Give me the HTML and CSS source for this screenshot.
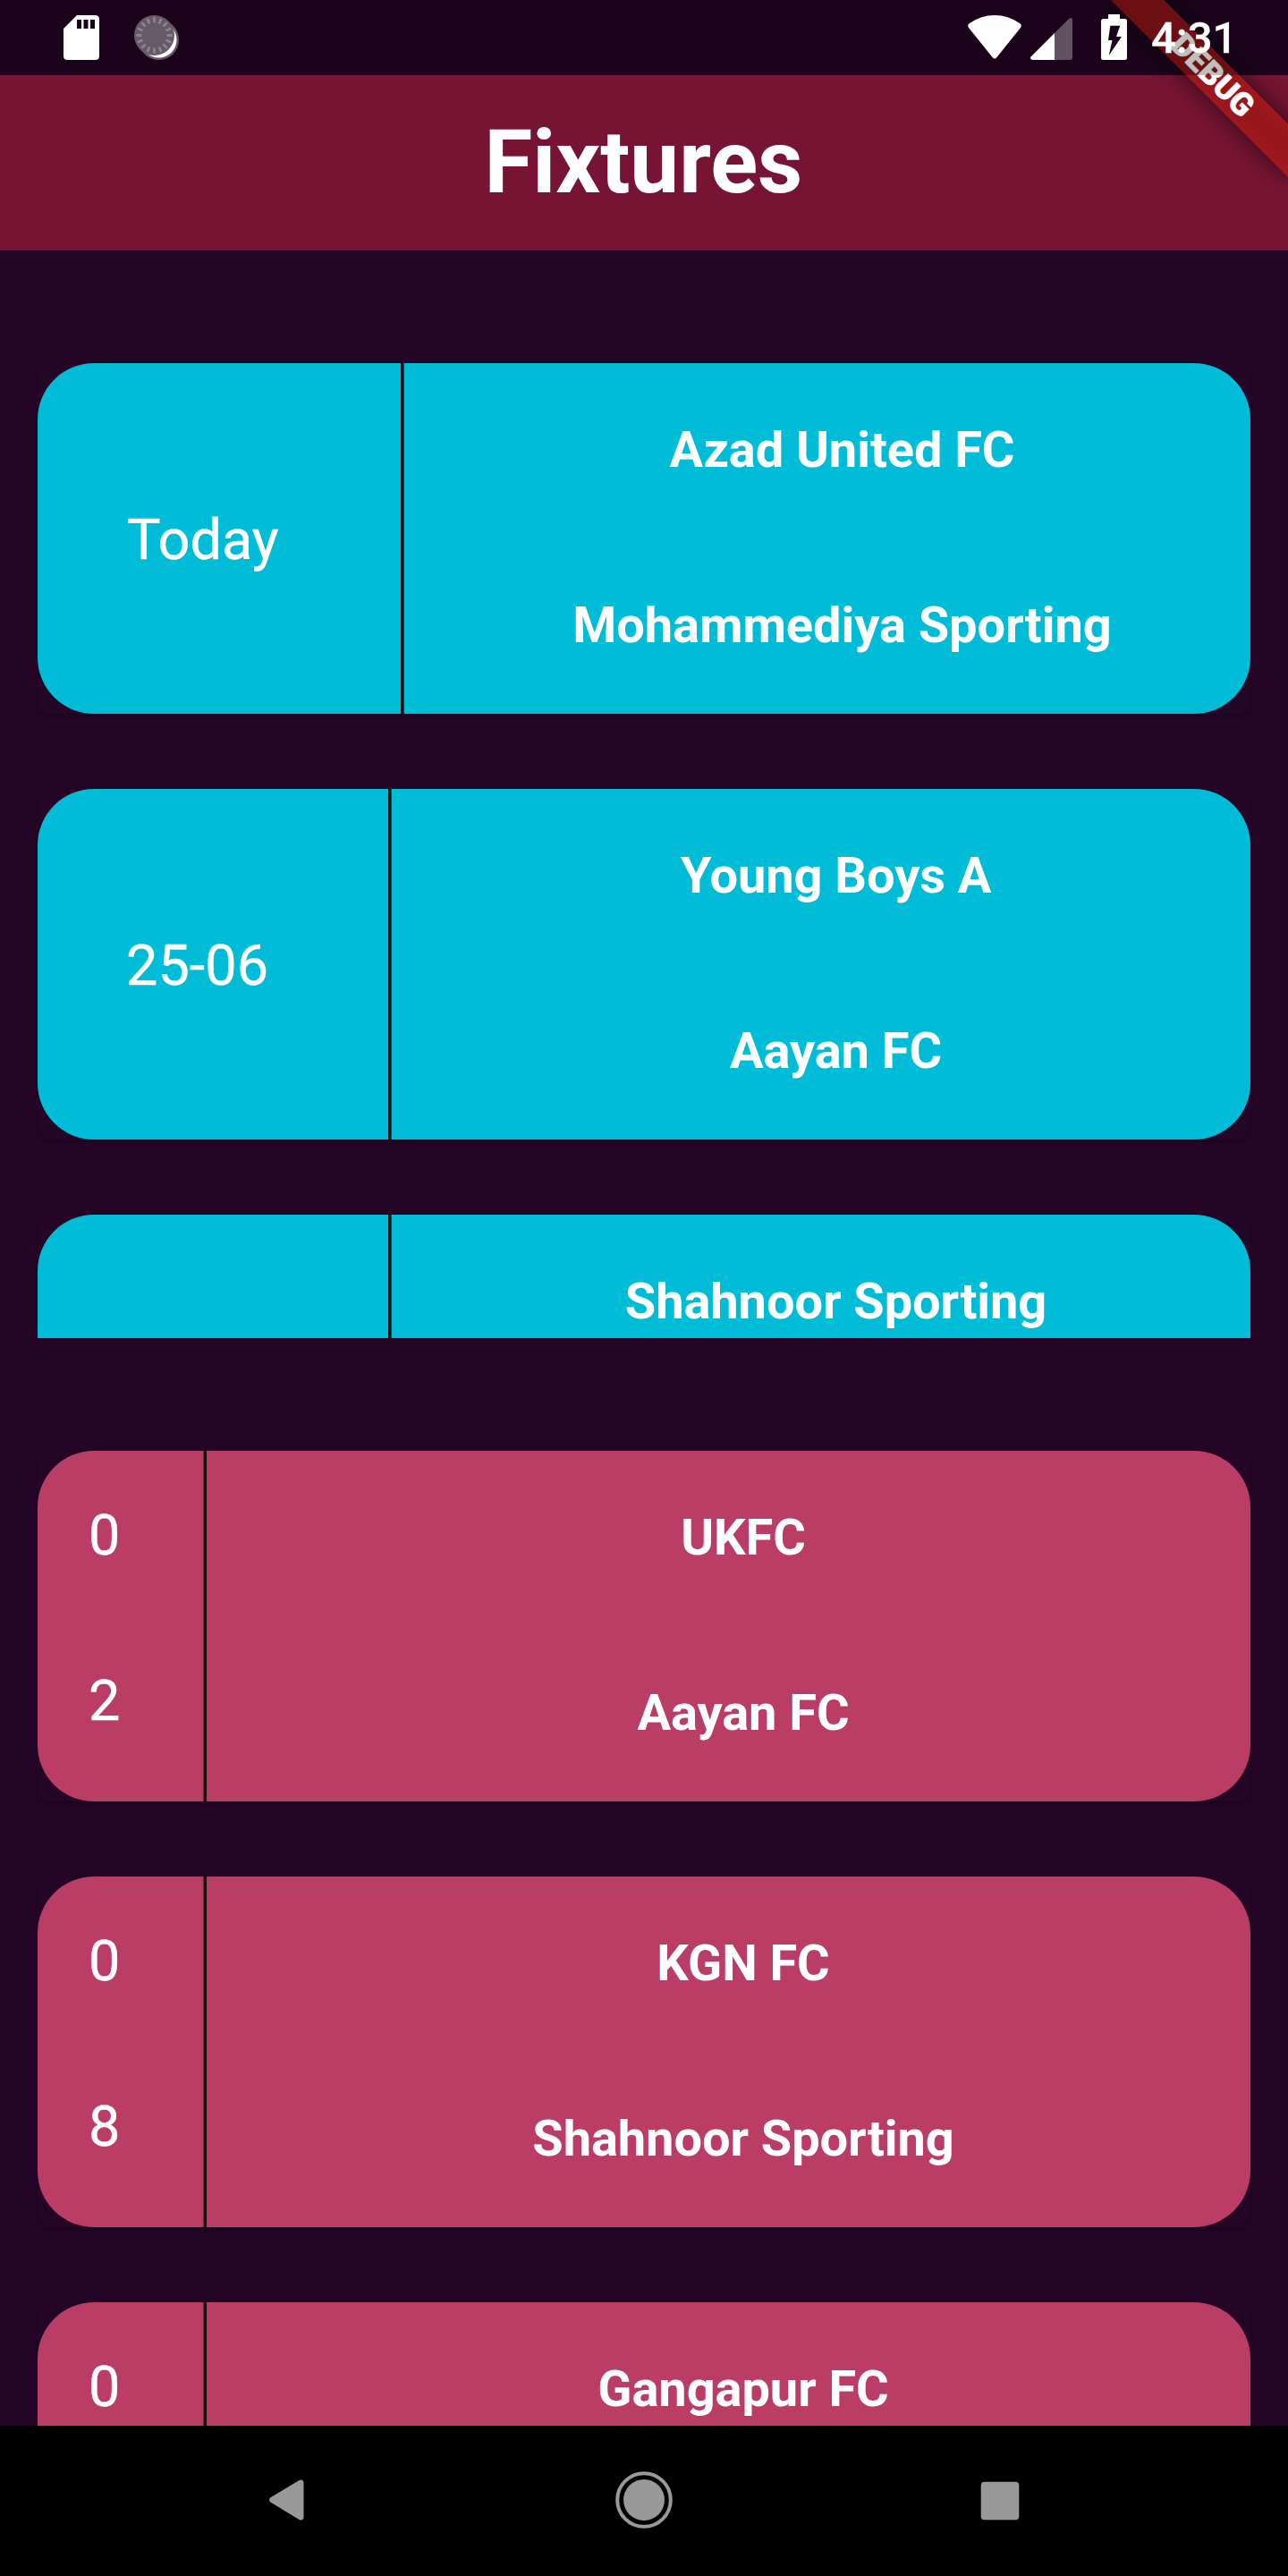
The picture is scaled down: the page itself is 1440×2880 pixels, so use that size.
FILE: index.html
```html
<!DOCTYPE html>
<html lang="en">
<head>
<meta charset="utf-8">
<title>Fixtures</title>
<link rel="stylesheet" href="styles.css">
</head>
<body>
<div class="screen">
  <header class="status-bar">
    <svg class="icons-left" width="260" height="84" viewBox="0 0 260 84">
      <path fill="#fff" fill-rule="evenodd" d="M86 17H106.500Q111 17 111 21.500V62.500Q111 67 106.500 67H75.500Q71 67 71 62.500V32ZM86 22V32H91V22ZM93.500 22V32H98.500V22ZM101 22V32H106V22Z"/>
      <circle cx="177.500" cy="44.500" r="22.500" fill="#685968"/>
      <circle cx="177.500" cy="44.500" r="20" fill="#fff"/>
      <circle cx="172.500" cy="39.500" r="22.500" fill="#685968"/>
      <g id="spokes" stroke="#8e8190" stroke-width="2.800" stroke-linecap="round">
        <path id="s" d="M172.500 20.500V24.300M172.500 54.700V58.500M153.500 39.500H157.300M187.700 39.500H191.500"/>
        <use href="#s" transform="rotate(22.500 172.500 39.500)"/>
        <use href="#s" transform="rotate(45 172.500 39.500)"/>
        <use href="#s" transform="rotate(67.500 172.500 39.500)"/>
      </g>
    </svg>
    <div class="status-right">
      <svg width="206" height="84" viewBox="1080 0 206 84">
        <path fill="#fff" d="M1083 31Q1081 28 1084 26Q1097 17 1112 17Q1127 17 1140 26Q1143 28 1141 31L1114.500 64Q1112 67 1109.500 64Z"/>
        <path fill="#615162" d="M1179 37L1195 21Q1199 18.500 1199 22.500V64Q1199 67 1196 67H1179Z"/>
        <path fill="#fff" d="M1179 37V67H1154.500Q1151 66.500 1152.500 63.500Z"/>
        <path fill="#fff" fill-rule="evenodd" d="M1239 16H1252V21H1257.500Q1260 21 1260 23.500V64.500Q1260 67 1257.500 67H1233.500Q1231 67 1231 64.500V23.500Q1231 21 1233.500 21H1239ZM1241.300 28.700L1239 45H1243.500L1239.700 62L1254 41H1248L1252.300 28.700Z"/>
      </svg>
      <span class="clock">4:31</span>
    </div>
  </header>

  <div class="app-bar"><h1 class="title">Fixtures</h1></div>

  <section class="list upcoming">
    <article class="card">
      <div class="face">
        <div class="date wide">Today</div><div class="rule"></div>
        <div class="teams"><div class="team">Azad United FC</div><div class="team">Mohammediya Sporting</div></div>
      </div>
    </article>
    <article class="card">
      <div class="face">
        <div class="date">25-06</div><div class="rule"></div>
        <div class="teams"><div class="team">Young Boys A</div><div class="team">Aayan FC</div></div>
      </div>
    </article>
    <article class="card">
      <div class="face">
        <div class="date"></div><div class="rule"></div>
        <div class="teams"><div class="team">Shahnoor Sporting</div><div class="team"></div></div>
      </div>
    </article>
  </section>

  <section class="list results">
    <article class="card">
      <div class="face">
        <div class="scores"><span>0</span><span>2</span></div><div class="rule"></div>
        <div class="teams"><div class="team">UKFC</div><div class="team">Aayan FC</div></div>
      </div>
    </article>
    <article class="card">
      <div class="face">
        <div class="scores"><span>0</span><span>8</span></div><div class="rule"></div>
        <div class="teams"><div class="team">KGN FC</div><div class="team">Shahnoor Sporting</div></div>
      </div>
    </article>
    <article class="card">
      <div class="face">
        <div class="scores"><span>0</span></div><div class="rule"></div>
        <div class="teams"><div class="team">Gangapur FC</div><div class="team"></div></div>
      </div>
    </article>
  </section>

  <nav class="nav-bar">
    <svg width="64" height="64" viewBox="0 0 64 64"><path fill="#999" d="M13.500 34.500Q10.500 32 13.500 29.300L45.500 10Q50 8.500 50.500 12.500V51.500Q50 55.500 45.500 54Z"/></svg>
    <svg width="64" height="64" viewBox="0 0 64 64"><circle cx="32" cy="32" r="29.800" fill="none" stroke="#999" stroke-width="4"/><circle cx="32" cy="32" r="23" fill="#999"/></svg>
    <svg width="64" height="64" viewBox="0 0 64 64"><rect x="10.700" y="11.700" width="42.600" height="42.600" rx="4" fill="#999"/></svg>
  </nav>

  <div class="banner">
    <div class="ribbon-shadow"></div>
    <div class="ribbon">DEBUG</div>
  </div>
</div>
</body>
</html>
```
FILE: styles.css
```css
* { box-sizing: border-box; }

body {
  margin: 0;
  background: #240526;
  font-family: Roboto, "Liberation Sans", sans-serif;
  color: #fff;
}

.screen {
  position: relative;
  width: 1440px;
  height: 2880px;
  overflow: hidden;
  display: flex;
  flex-direction: column;
}

/* Translucent scrim: it also darkens the ribbon that passes under it. */
.status-bar {
  position: relative;
  z-index: 2;
  flex: 0 0 84px;
  height: 84px;
  min-height: 0;
  display: flex;
  justify-content: space-between;
  background: rgba(0, 0, 0, 0.25);
}

.status-right { display: flex; height: 84px; padding-right: 59px; }

.clock {
  width: 95px;
  padding-left: 1px;
  padding-top: 2px;
  height: 84px;
  font-size: 49px;
  font-weight: 500;
  line-height: 82px;
  white-space: nowrap;
  -webkit-text-stroke: 0.3px #fff;
}

.app-bar {
  flex: 0 0 196px;
  display: flex;
  align-items: center;
  justify-content: center;
  padding-right: 1px;
  background: #771433;
}

.title { margin: 0; font-size: 98px; font-weight: 700; line-height: 114px; }

.list {
  flex: 0 0 1216px;
  display: flex;
  flex-direction: column;
  gap: 84px;
  padding: 126px 42px 0;
  overflow: hidden;
}

.card {
  flex: 0 0 392px;
  border-radius: 14px;
  box-shadow: 0 3px 5px rgba(0, 0, 0, 0.25);
}

.face {
  display: flex;
  height: 392px;
  border-radius: 63px;
  overflow: hidden;
}

.upcoming .face { background: #00bcd7; }
.results .face { background: #ba3d65; }

.rule { flex: 0 0 4px; }
.upcoming .rule { background: linear-gradient(90deg, rgba(0,0,0,.87) 3px, rgba(0,0,0,.55) 3px); }
.results .rule { background: linear-gradient(90deg, rgba(0,0,0,.45) 1px, rgba(0,0,0,.87) 1px); }

.date {
  flex: 0 0 392px;
  padding: 2px 0 0 99px;
  font-size: 63px;
  line-height: 392px;
  -webkit-text-stroke: 0.4px #fff;
}

.date.wide { flex-basis: 406px; padding-left: 100px; }

.scores {
  flex: 0 0 185px;
  display: flex;
  flex-direction: column;
  gap: 111px;
  padding: 58px 0 0 57px;
  font-size: 63px;
  line-height: 74px;
  -webkit-text-stroke: 0.4px #fff;
}

.teams {
  flex: 1;
  display: grid;
  grid-template-rows: 196px 196px;
  padding-left: 33px;
}

.team {
  padding-bottom: 2px;
  font-size: 56px;
  font-weight: 700;
  line-height: 194px;
  letter-spacing: -0.08px;
  text-align: center;
  white-space: nowrap;
}

.nav-bar {
  position: relative;
  z-index: 2;
  flex: 0 0 168px;
  display: flex;
  justify-content: space-between;
  align-items: center;
  padding: 0 290px 2px 289px;
  background: #000;
}

.banner {
  position: absolute;
  z-index: 1;
  left: 1440px;
  top: 0;
  width: 0;
  height: 0;
  transform: rotate(45deg);
}

.ribbon-shadow, .ribbon {
  position: absolute;
  left: -140px;
  top: 98px;
  width: 280px;
  height: 42px;
}

.ribbon-shadow { background: rgba(0, 0, 0, 0.6); filter: blur(13.9px); }

.ribbon {
  background: rgba(183, 28, 28, 0.76);
  font-size: 35.7px;
  font-weight: 900;
  line-height: 42px;
  text-align: center;
  -webkit-text-stroke: 0.5px #fff;
}
```
